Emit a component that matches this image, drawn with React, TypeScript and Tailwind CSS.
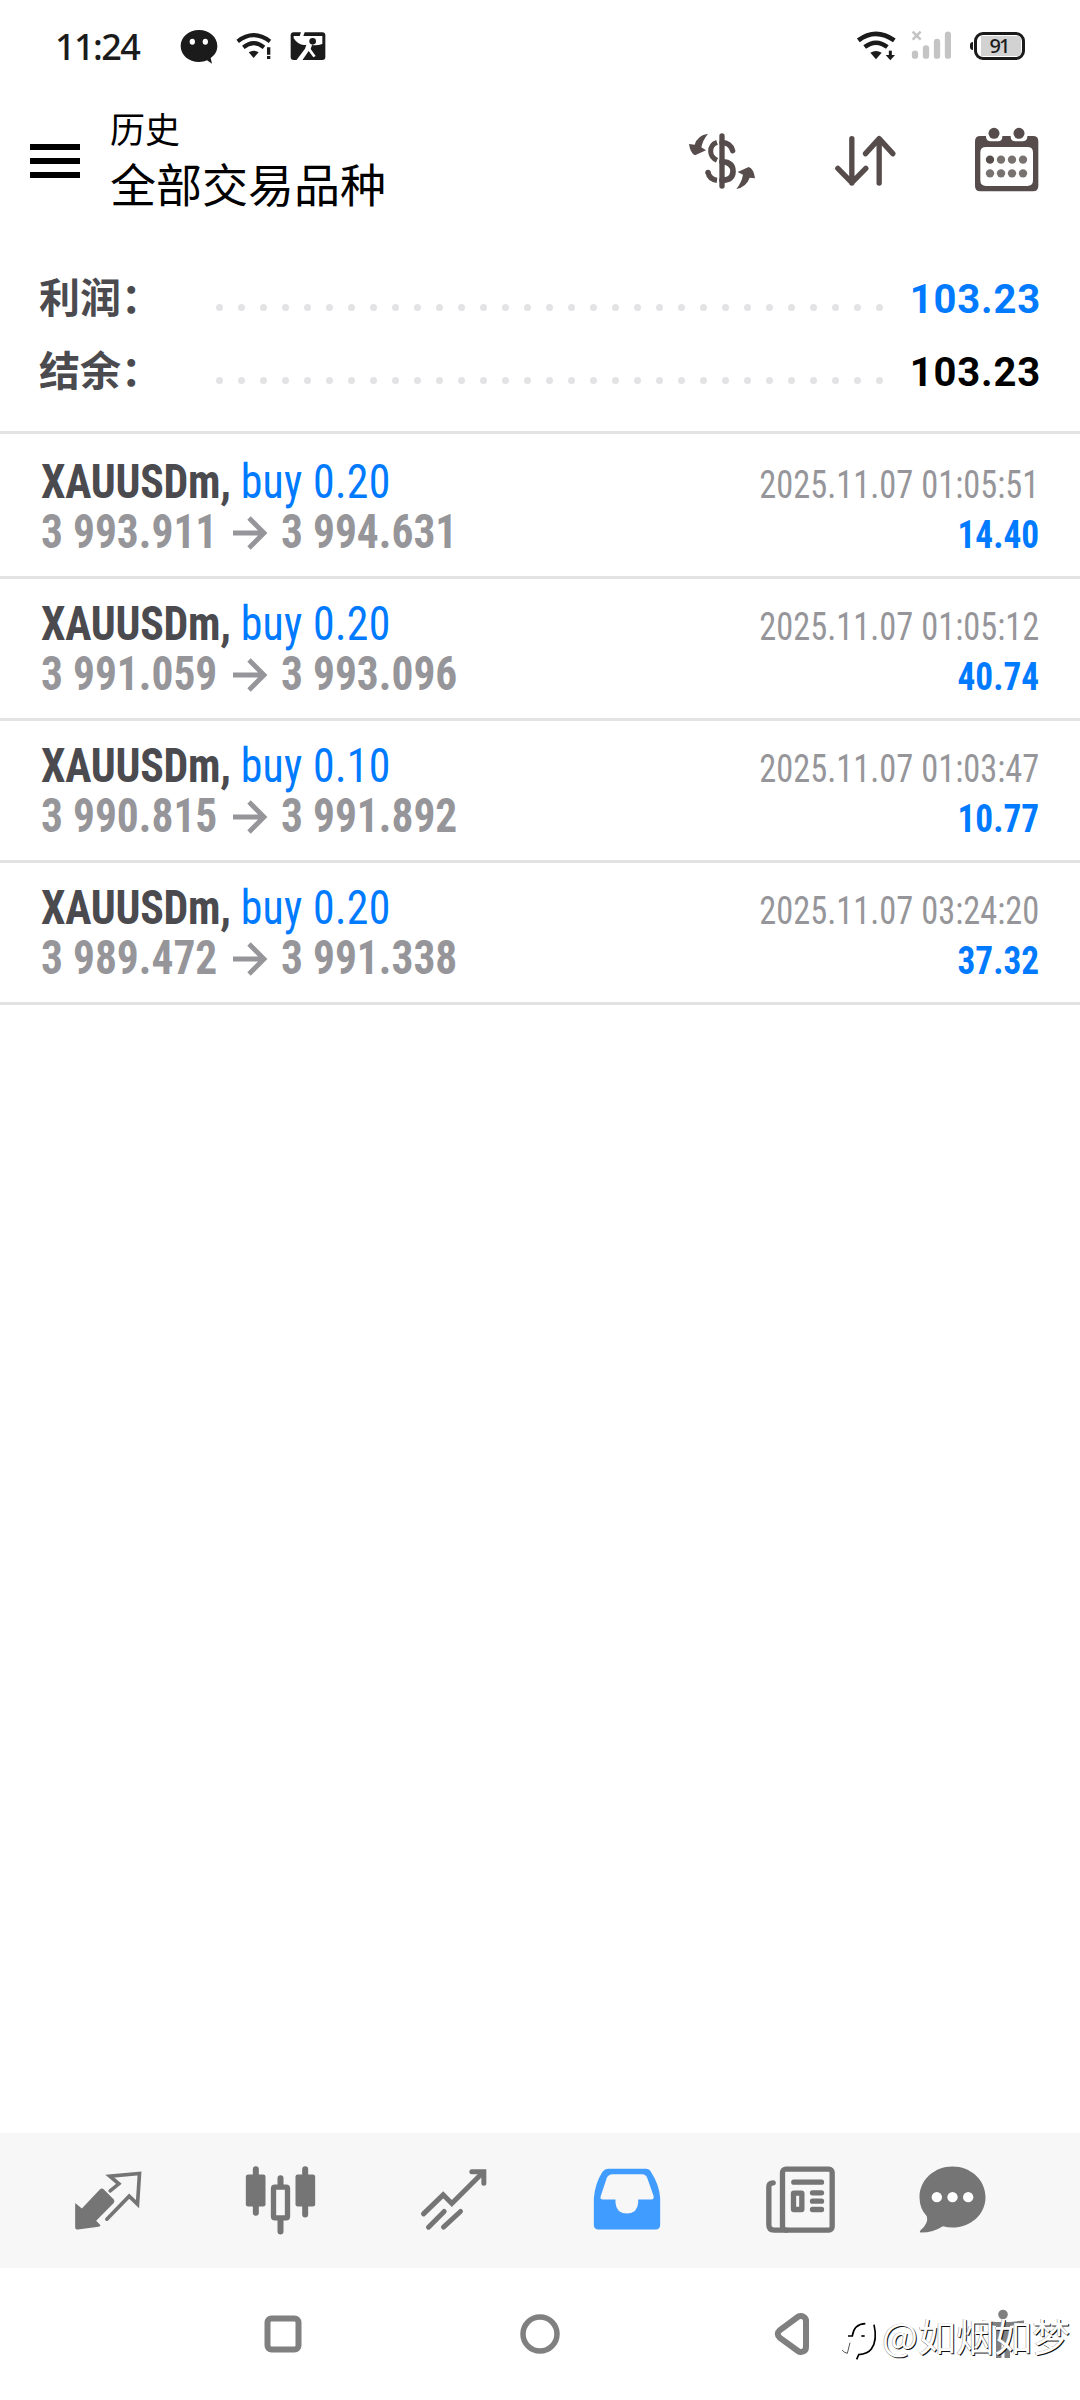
const deals = [
    { symbol: 'XAUUSDm', side: 'buy 0.20', open: '3 993.911', close: '3 994.631', time: '2025.11.07 01:05:51', profit: '14.40' },
    { symbol: 'XAUUSDm', side: 'buy 0.20', open: '3 991.059', close: '3 993.096', time: '2025.11.07 01:05:12', profit: '40.74' },
    { symbol: 'XAUUSDm', side: 'buy 0.10', open: '3 990.815', close: '3 991.892', time: '2025.11.07 01:03:47', profit: '10.77' },
    { symbol: 'XAUUSDm', side: 'buy 0.20', open: '3 989.472', close: '3 991.338', time: '2025.11.07 03:24:20', profit: '37.32' },
];

function StatusBar() {
    return (
        <div className="flex h-[92px] items-center pl-[55px] pr-[54px] text-[#1b1b1b]">
            <span className="mt-px w-[125px] font-['Noto_Sans'] text-[36px] font-medium leading-none tracking-[-1.6px]">11:24</span>

            {/* Chat */}
            <svg className="h-[36px] w-[38px]" viewBox="0 0 114 108" fill="currentColor">
                <path d="M57 6C26 6 2 27 2 54s24 48 55 48c9 0 17-2 24-5l15 10-4-17c13-9 20-21 20-36C112 27 88 6 57 6Z" />
                <ellipse cx="37" cy="41" rx="8" ry="9" fill="white" />
                <ellipse cx="76" cy="41" rx="8" ry="9" fill="white" />
            </svg>

            {/* Wifi with alert */}
            <svg className="ml-[18px] h-[30px] w-[36px]" viewBox="0 0 108 90" fill="none" stroke="currentColor">
                <path d="M5 31Q52 -6 102 31" strokeWidth="12" />
                <path d="M22 49Q53 24 84 49" strokeWidth="12" />
                <path d="M38 64Q53 54 68 64L53 81Z" fill="currentColor" stroke="none" />
                <path d="M98 49V71M98 75V84" strokeWidth="10" />
            </svg>

            {/* Picture */}
            <svg className="ml-[18px] h-[30px] w-[36px]" viewBox="0 0 108 90">
                <rect x="2" y="4" width="104" height="83" rx="9" fill="currentColor" />
                <path d="M11 15H97V39Q80 45 66 42L62 54L77 75L70 79L56 60L37 88H19L45 53L49 41Q27 46 11 22Z" fill="white" />
                <path d="M33 3L29 16H40L44 3Z" fill="white" />
                <circle cx="68" cy="31" r="10" fill="currentColor" />
            </svg>

            {/* Wifi with download arrow */}
            <svg className="ml-auto h-[32px] w-[40px]" viewBox="0 0 120 96" fill="none" stroke="currentColor">
                <path d="M7 31Q59 -8 115 31" strokeWidth="14" />
                <path d="M26 51Q60 25 94 51" strokeWidth="13" />
                <path d="M43 68Q60 58 77 68L60 88Z" fill="currentColor" stroke="none" />
                <path d="M103 62V80" strokeWidth="9" />
                <path d="M89 75H117L103 91Z" fill="currentColor" stroke="none" />
            </svg>

            {/* No signal */}
            <svg className="ml-[15px] mr-px h-[32px] w-[40px]" viewBox="0 0 120 96" stroke="#c4c4c4" strokeLinecap="round" fill="none">
                <path d="M5 5L29 29M29 5L5 29" strokeWidth="8" strokeLinecap="butt" />
                <path d="M12 71V77M45 55V77M78 36V77M111 14V77" strokeWidth="19" />
            </svg>

            {/* Battery */}
            <div className="ml-[18px] mr-px flex items-center">
                <div className="mr-px h-[8px] w-[3px] rounded-l-full bg-[#1b1b1b]" />
                <div className="flex h-[28px] w-[51px] rounded-[9px] border-[3px] border-[#1b1b1b] py-px pl-[4px] pr-px">
                    <span className="flex-1 rounded-r-[4px] bg-[#d2d2d2] pr-[4px] text-center font-['Noto_Sans'] text-[20px] font-medium leading-[20px] tracking-[-2px]">
                        91
                    </span>
                </div>
            </div>
        </div>
    );
}

function Header() {
    return (
        <header className="flex h-[136px] items-center pl-[30px] pr-[28px]">
            <div className="mt-[2px] flex w-[50px] flex-col gap-[8px]">
                <div className="h-[5.8px] bg-black" />
                <div className="h-[5.8px] bg-black" />
                <div className="h-[5.8px] bg-black" />
            </div>
            <div className="mb-[6px] ml-[30px] text-black font-['Noto_Sans_CJK_SC',sans-serif]">
                <div className="text-[35px] leading-[50px]">历史</div>
                <div className="text-[46px] leading-[58px]">全部交易品种</div>
            </div>

            <div className="ml-auto flex gap-[52.5px] text-[#554c4b]">
                {/* Currency */}
                <svg className="size-[90px]" viewBox="111 345 270 270" fill="none" stroke="currentColor" strokeLinecap="round">
                    <path d="M246 408V558" strokeWidth="16" />
                    <path d="M231 427Q211 434 212 455Q213 473 231 481" strokeWidth="15" strokeLinecap="butt" />
                    <path d="M204 517Q208 538 231 541" strokeWidth="16" strokeLinecap="butt" />
                    <path d="M204 517V517.1" strokeWidth="16" />
                    <path d="M246 428Q271 428 278 452" strokeWidth="16" />
                    <path d="M246 485Q279 487 279 514Q279 541 246 541" strokeWidth="17" />
                    <path d="M204 401Q188 421 184 442L198 451L165 466Q151 460 147 432L164 434Q172 406 204 401Z" fill="currentColor" stroke="none" />
                    <path d="M289 567Q305 547 309 524L293 516L326 501Q341 506 345 535L329 533Q319 561 289 567Z" fill="currentColor" stroke="none" />
                </svg>

                {/* Sort */}
                <svg className="size-[90px]" viewBox="538.5 345 270 270" fill="none" stroke="currentColor" strokeWidth="16" strokeLinecap="round" strokeLinejoin="round">
                    <path d="M634 416V549M592 505L634 548L676 505" />
                    <path d="M716 549V416M675 461L716 416L757 461" />
                </svg>

                {/* Calendar */}
                <svg className="size-[90px]" viewBox="966 345 270 270" fill="currentColor">
                    <path d="M1021 408H1038V411Q1040 424 1052 424H1074Q1086 424 1087 411V408H1112V411Q1113 424 1126 424H1148Q1160 424 1162 411V408H1179Q1195 408 1195 424V558Q1195 574 1179 574H1021Q1005 574 1005 558V424Q1005 408 1021 408ZM1038 441Q1021 441 1021 457V541Q1021 558 1038 558H1162Q1179 558 1179 541V457Q1179 441 1162 441Z" fillRule="evenodd" />
                    <circle cx="1062" cy="400" r="16.5" />
                    <circle cx="1137" cy="400" r="16.5" />
                    <circle cx="1050" cy="479" r="12.5" />
                    {[1083, 1116, 1149].map((cx) => (
                        <circle key={cx} cx={cx} cy="479" r="12.5" fill="#777170" />
                    ))}
                    {[1050, 1083, 1116, 1149].map((cx) => (
                        <circle key={cx} cx={cx} cy="520" r="12.5" fill="#777170" />
                    ))}
                </svg>
            </div>
        </header>
    );
}

function SummaryRow({ label, value, color }: { label: string; value: string; color: string }) {
    return (
        <div className="flex h-[73px] items-center">
            <span className="mb-[7px] w-[177px] whitespace-nowrap font-['Noto_Sans_CJK_SC',sans-serif] text-[41px] font-bold leading-[60px] text-[#4a4a4f]">{label}</span>
            <div className="mt-[18px] flex w-[667px] justify-between">
                {Array.from({ length: 31 }, (_, i) => (
                    <div key={i} className="size-[7px] rounded-full bg-[#e3e3e5]" />
                ))}
            </div>
            <span className={`ml-auto mt-[2px] font-[Roboto] text-[40px] font-bold leading-none tracking-[0.8px] ${color}`}>{value}</span>
        </div>
    );
}

function DealRow({ deal }: { deal: (typeof deals)[number] }) {
    return (
        <div className="flex items-baseline justify-between border-b-[3px] border-[#e3e3e3] pb-[16px] pl-[41px] pr-[41px] pt-[20px] font-[Roboto] [font-stretch:75%] first:pt-[23px]">
            <div className="text-[48px] leading-[50px]">
                <div className="origin-left scale-x-[0.912] whitespace-nowrap">
                    <span className="font-bold tracking-[-0.3px] text-[#4a4a4f]">{deal.symbol},</span>{' '}
                    <span className="tracking-[0.35px] text-[#007aff]">{deal.side}</span>
                </div>
                <div className="flex items-center font-bold text-[#96969a]">
                    <span className="w-[192px] origin-left scale-x-[0.905] whitespace-nowrap">{deal.open}</span>
                    <svg className="h-[36px] w-[48px]" viewBox="0 0 48 36" fill="none" stroke="currentColor" strokeWidth="4.8">
                        <path d="M0 19H31M16 4L31 19L16 34" />
                    </svg>
                    <span className="origin-left scale-x-[0.905] whitespace-nowrap">{deal.close}</span>
                </div>
            </div>
            <div className="text-right text-[38px] leading-[50px]">
                <div className="origin-right scale-x-[0.905] whitespace-nowrap text-[#96969a]">{deal.time}</div>
                <div className="origin-right scale-x-[0.93] font-bold text-[#007aff]">{deal.profit}</div>
            </div>
        </div>
    );
}

function TabBar() {
    return (
        <nav className="grid h-[135px] grid-cols-[173px_173px_173px_173px_173px_133px] items-center justify-items-center bg-[#f7f7f7] pl-[21px] text-[#757575]">
            {/* Quotes */}
            <svg className="size-[90px]" viewBox="10.5 46.5 270 270" fill="currentColor">
                <path d="M48 188L67 204L121 147Q127 141 133 147L163 177Q167 182 162 188L110 241L123 254Q122 258 117 259L55 267Q47 267 47 260V189Z" />
                <path d="M152 151L178 130L151 107L240 99L234 191L209 167L142 236" fill="none" stroke="currentColor" strokeWidth="11" strokeLinecap="round" />
            </svg>

            {/* Chart */}
            <svg className="size-[90px]" viewBox="529.5 46.5 270 270" fill="none" stroke="currentColor">
                <path d="M589 86V217M737 86V222M663 113V135M663 235V273" strokeWidth="18" strokeLinecap="round" />
                <rect x="559" y="102" width="59" height="96" rx="7" fill="currentColor" stroke="none" />
                <rect x="708" y="102" width="59" height="96" rx="7" fill="currentColor" stroke="none" />
                <rect x="642" y="140" width="42" height="92" rx="4" strokeWidth="16" fill="#f7f7f7" />
            </svg>

            {/* Trade */}
            <svg className="size-[90px]" viewBox="28.5 46.5 270 270" fill="none" stroke="currentColor" strokeWidth="15" strokeLinecap="round">
                <path d="M72 220L131 163L157 189L248 98" />
                <path d="M217 94H253V128" />
                <path d="M87 260L134 213M132 260L183 213" />
            </svg>

            {/* History */}
            <svg className="size-[90px]" viewBox="547.5 46.5 270 270" fill="#419cff">
                <path d="M626 85H739Q749 85 755 95Q780 134 782 173V253Q782 267 768 267H597Q583 267 583 253V173Q587 128 609 94Q616 85 626 85ZM639 101Q627 101 622 112L604 166Q600 177 610 177H648V187Q650 219 682 219Q714 219 716 187V177H755Q765 177 762 166L743 112Q739 101 728 101Z" fillRule="evenodd" />
            </svg>

            {/* News */}
            <svg className="size-[90px]" viewBox="16.5 46.5 270 270" fill="none" stroke="currentColor" strokeWidth="16" strokeLinecap="round">
                <rect x="99" y="86" width="149" height="183" rx="10" />
                <path d="M71 127Q58 127 58 139V253Q58 269 74 269H110" />
                <path d="M133 125H216M189 157H216M189 182H216M189 207H216" />
                <rect x="132" y="158" width="25" height="49" rx="1" />
            </svg>

            {/* Messages */}
            <svg className="size-[90px]" viewBox="475.5 46.5 270 270" fill="currentColor">
                <path d="M609 78C663 78 708 118 708 170C708 222 663 261 609 261Q594 261 580 257Q551 276 516 276Q508 276 513 269Q538 248 532 227Q510 204 510 170C510 118 555 78 609 78Z" />
                <circle cx="562" cy="170" r="15.5" fill="white" />
                <circle cx="609" cy="170" r="15.5" fill="white" />
                <circle cx="656" cy="170" r="15.5" fill="white" />
            </svg>
        </nav>
    );
}

function SystemNav() {
    return (
        <div className="relative flex h-[132px] items-center pl-[250px] text-[#808080]">
            <svg className="size-[66px]" viewBox="0 0 66 66" fill="none" stroke="currentColor" strokeWidth="6">
                <rect x="17.5" y="17.5" width="31" height="31" rx="4" />
            </svg>
            <svg className="ml-[191px] size-[66px]" viewBox="0 0 66 66" fill="none" stroke="currentColor" strokeWidth="5.5">
                <circle cx="33" cy="33" r="17" />
            </svg>
            <svg className="ml-[186px] size-[66px]" viewBox="0 0 66 66" fill="none" stroke="currentColor" strokeWidth="6">
                <path d="M39 15.8Q41 14.5 43.5 15.2Q47 16.5 47 20V46Q47 49.5 44 50.5Q41 51.5 39 50L21 37Q16.5 33 21 29Z" />
            </svg>
            <svg className="ml-[145px] size-[66px]" viewBox="0 0 66 66" fill="currentColor">
                <circle cx="33" cy="13.5" r="4.8" />
                <path d="M12 19.5L26 21H40L54 19.5V22.5L40 25V57H34.5V43H31.5V57H26V25L12 22.5Z" />
            </svg>

            {/* Watermark */}
            <div className="absolute bottom-[37px] left-[840px] flex items-center text-white">
                <svg className="mt-[8px] h-[42px] w-[42px]" viewBox="0 0 126 126" fill="none" stroke="black" strokeWidth="4">
                    <path d="M6 96Q12 104 22 106L30 74" strokeWidth="2" />
                    <path d="M24 54H37Q42 18 76 17" strokeWidth="5" />
                    <path d="M64 54H74" strokeWidth="5" />
                    <path d="M102 20Q113 68 94 93Q84 107 56 110L50 124" strokeWidth="5" />
                </svg>
                <span className="whitespace-nowrap font-['Noto_Sans_CJK_SC',sans-serif] text-[38px] leading-[56px] [text-shadow:1px_1px_0_#111,-0.5px_-0.5px_0_#999]">
                    @如烟如梦
                </span>
            </div>
        </div>
    );
}

export default function App() {
    return (
        <div className="flex h-[2400px] w-[1080px] flex-col overflow-hidden bg-white">
            <StatusBar />
            <Header />
            <section className="h-[206px] border-b-[3px] border-[#e3e3e3] pl-[39px] pr-[39px] pt-[34px]">
                <SummaryRow label="利润：" value="103.23" color="text-[#007aff]" />
                <SummaryRow label="结余：" value="103.23" color="text-black" />
            </section>
            <main className="flex-1">
                {deals.map((deal, i) => (
                    <DealRow key={i} deal={deal} />
                ))}
            </main>
            <TabBar />
            <SystemNav />
        </div>
    );
}
